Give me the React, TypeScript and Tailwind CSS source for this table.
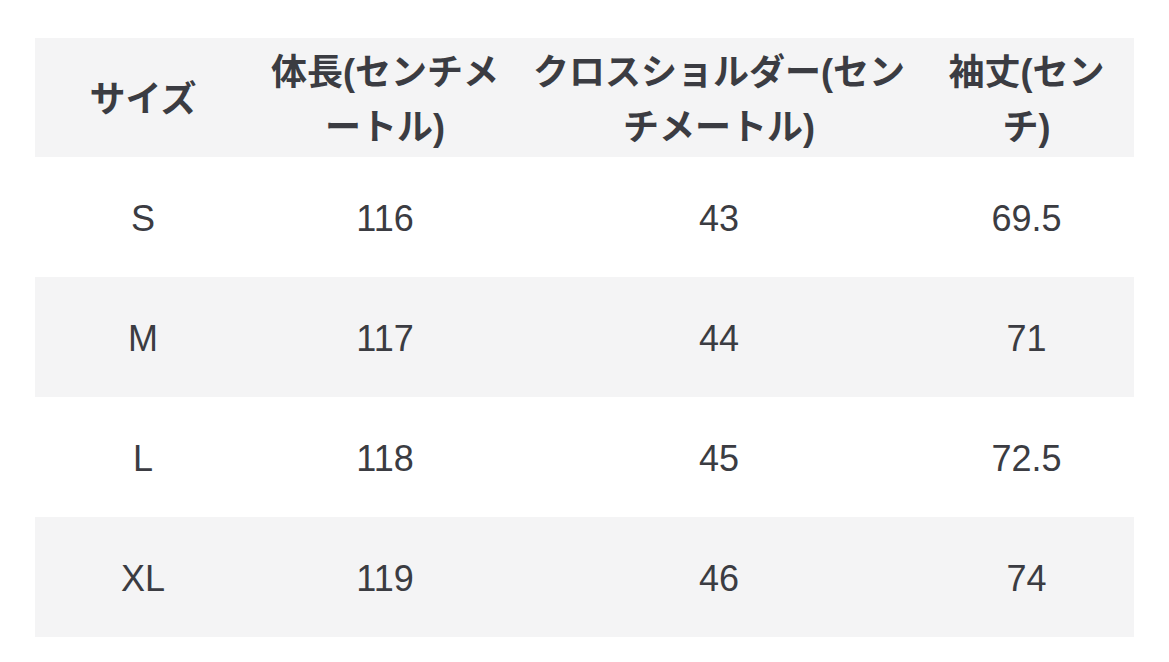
const header: string[][] = [
  ["サイズ"],
  ["体長(センチメ", "ートル)"],
  ["クロスショルダー(セン", "チメートル)"],
  ["袖丈(セン", "チ)"],
];

const rows = [
  ["S", "116", "43", "69.5"],
  ["M", "117", "44", "71"],
  ["L", "118", "45", "72.5"],
  ["XL", "119", "46", "74"],
];

const widths = ["w-[216px]", "w-[268px]", "w-[400px]", "w-[215px]"];

export default function App() {
  return (
    <div
      className="min-h-[662px] bg-white pl-[35px] pt-[38px] text-[#3b3c42]"
      style={{ fontFamily: '"Liberation Sans", "Noto Sans CJK JP", sans-serif' }}
    >
      <table className="table-fixed border-collapse">
        <thead>
          <tr className="h-[119px] bg-[#f4f4f5]">
            {header.map((lines, i) => (
              <th key={i} className={`${widths[i]} p-0 pt-[4px] text-center align-middle text-[36px] font-bold leading-[55px]`}>
                {lines.map((line) => (
                  <span key={line} className="block whitespace-nowrap">
                    {line}
                  </span>
                ))}
              </th>
            ))}
          </tr>
        </thead>
        <tbody>
          {rows.map((row, r) => (
            <tr key={row[0]} className={`h-[120px] ${r % 2 === 1 ? "bg-[#f4f4f5]" : "bg-white"}`}>
              {row.map((cell, i) => (
                <td key={i} className={`${widths[i]} p-0 pt-[3px] text-center align-middle text-[36px] leading-none`}>
                  {cell}
                </td>
              ))}
            </tr>
          ))}
        </tbody>
      </table>
    </div>
  );
}
